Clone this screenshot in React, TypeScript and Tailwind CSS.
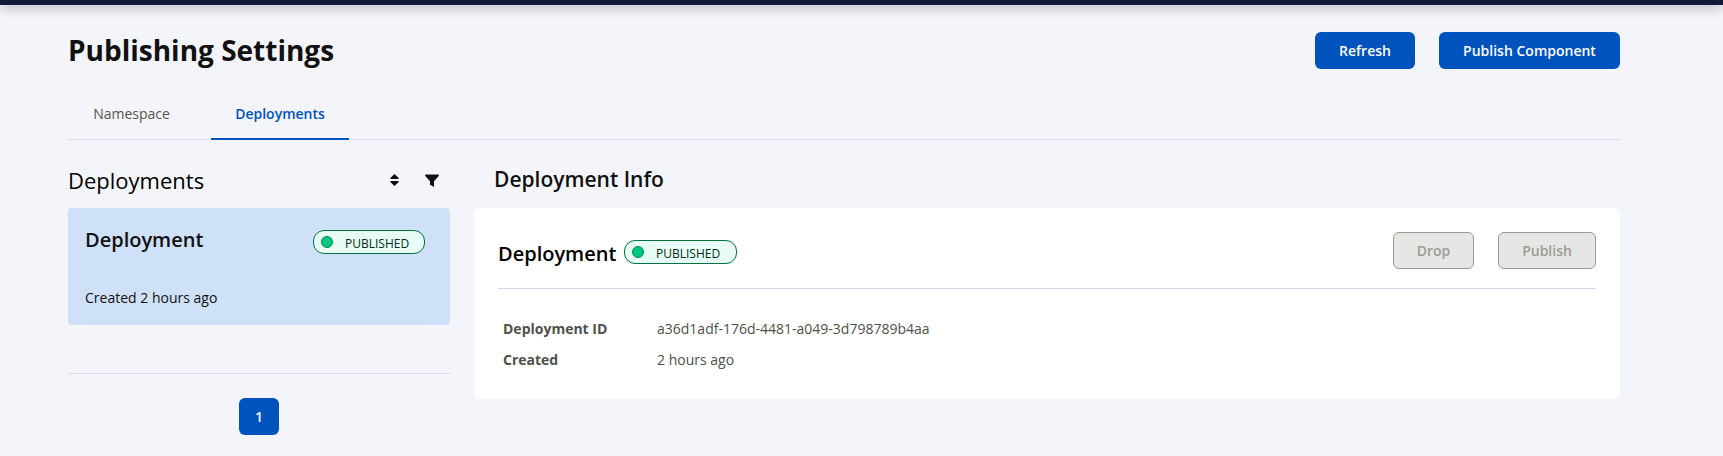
import React from 'react';

function Badge({ className }: { className: string }) {
  return (
    <span className={`flex h-6 items-center rounded-[11px] border border-[#00733f] bg-[#e6fcf4] pl-[7px] text-[12px] text-[#0a2b1c] ${className}`}>
      <span className="size-3 shrink-0 rounded-full border border-[#008a50] bg-[#00c781]" />
      <span className="ml-3 pt-[3px] leading-4">PUBLISHED</span>
    </span>
  );
}

function Button({ children, className }: { children: React.ReactNode; className: string }) {
  return (
    <button className={`flex h-[37px] items-center justify-center rounded-md text-sm font-semibold ${className}`}>
      {children}
    </button>
  );
}

const primary = 'bg-[#0052bd] text-white';
const disabled = 'border border-[#9c9c94] bg-[#e6e6e4] text-[#9c9c94]';

export default function App() {
  return (
    <div className="h-[456px] overflow-hidden bg-[#f4f5fb] font-['Open_Sans',sans-serif] text-[#111]">
      <div className="h-[5px] bg-[#121a35] shadow-[0_2px_12px_rgba(0,0,0,0.4)]" />
      <div className="ml-[68px] w-[1552px]">
        <header className="flex items-start justify-between pt-[27px]">
          <h1 className="-mt-px text-[28px] leading-[38px] font-bold">Publishing Settings</h1>
          <div className="flex gap-6">
            <Button className={`w-[100px] ${primary}`}>Refresh</Button>
            <Button className={`w-[181px] ${primary}`}>Publish Component</Button>
          </div>
        </header>

        <nav className="mt-[21px] flex h-[50px] gap-4 border-b border-[#d9dbe9] text-sm">
          <a className="h-[50px] w-[127px] pt-[14px] text-center text-[#55554f]">Namespace</a>
          <a className="h-[50px] w-[138px] border-b-2 border-[#0052bd] pt-[14px] text-center font-semibold text-[#0052bd]">Deployments</a>
        </nav>

        <main className="flex gap-6">
          <section className="w-[382px]">
            <div className="flex h-[68px] items-center pt-3">
              <h2 className="flex-1 text-[22px] leading-7 text-black">Deployments</h2>
              <svg className="mr-[26px] h-3 w-[9px]" viewBox="0 0 9 12" fill="#111">
                <path d="M4.5 0 8.7 4Q9 5 8 5H1Q0 5 .3 4ZM4.5 12 8.7 8Q9 7 8 7H1Q0 7 .3 8Z" />
              </svg>
              <svg className="mr-[11px] h-[13px] w-[14px]" viewBox="0 0 14 13" fill="#111">
                <path d="M.6.5H13.4Q14.3 1 13.7 2L9 7.2V12.2Q8.7 13 8 12.6L5.4 10.8Q5 10.5 5 10V7.2L.3 2Q-.3 1 .6.5Z" />
              </svg>
            </div>
            <article className="h-[117px] rounded bg-[#cfe0f9] pl-[17px]">
              <div className="flex justify-between pr-[25px]">
                <h3 className="pt-[18px] text-[20px] leading-7 font-semibold">Deployment</h3>
                <Badge className="mt-[22px] w-[112px]" />
              </div>
              <p className="mt-[34px] text-sm leading-5">Created 2 hours ago</p>
            </article>
            <div className="mt-12 flex justify-center border-t border-[#d9dbe9] pt-6">
              <Button className={`w-10 ${primary}`}>1</Button>
            </div>
          </section>

          <section className="w-[1146px]">
            <div className="h-[68px] pt-[25px] pl-5">
              <h2 className="text-[21px] leading-7 font-semibold">Deployment Info</h2>
            </div>
            <article className="h-[191px] rounded-md bg-white px-6 pt-6">
              <div className="flex h-[57px] border-b border-[#d3d8ec]">
                <h3 className="w-[126px] pt-2 text-[20px] leading-7 font-semibold text-black">Deployment</h3>
                <Badge className="mt-2 w-[113px]" />
                <div className="ml-auto flex gap-6">
                  <Button className={`w-[81px] ${disabled}`}>Drop</Button>
                  <Button className={`w-[98px] ${disabled}`}>Publish</Button>
                </div>
              </div>
              <dl className="mt-6 grid grid-cols-[154px_1fr] pl-[5px] text-sm leading-[31px] text-[#50504a]">
                <dt className="font-bold">Deployment ID</dt>
                <dd>a36d1adf-176d-4481-a049-3d798789b4aa</dd>
                <dt className="font-bold">Created</dt>
                <dd>2 hours ago</dd>
              </dl>
            </article>
          </section>
        </main>
      </div>
    </div>
  );
}
